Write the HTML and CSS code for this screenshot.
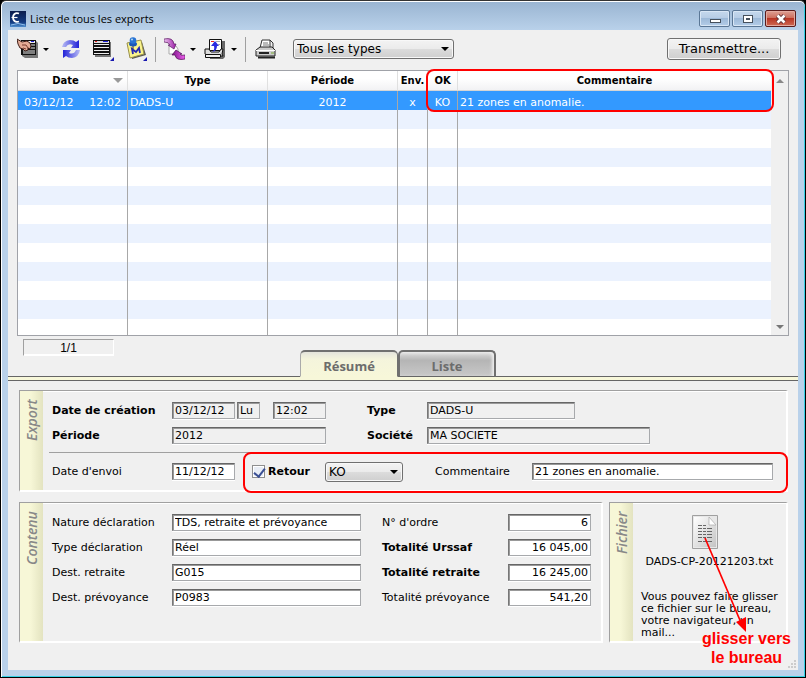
FILE: index.html
```html
<!DOCTYPE html>
<html lang="fr">
<head>
<meta charset="utf-8">
<title>Liste de tous les exports</title>
<link rel="stylesheet" href="styles.css">
</head>
<body>
<div class="window">
  <header class="titlebar">
    <svg class="app-icon" width="16" height="16" viewBox="0 0 16 16" aria-hidden="true">
      <defs><linearGradient id="app" x1="0" y1="0" x2="0" y2="1"><stop offset="0" stop-color="#0a1c4c"/><stop offset=".7" stop-color="#123a80"/><stop offset="1" stop-color="#4f8fd0"/></linearGradient></defs>
      <rect width="16" height="16" fill="url(#app)"/>
      <path d="M9 2.500C5 1 3 4 3 6.500S5 12 9 10.500" fill="none" stroke="#fff" stroke-width="1.800"/>
      <path d="M1.500 6.500h6" stroke="#fff" stroke-width="1.200"/>
      <path d="M1 14q7-3 14 0" fill="none" stroke="#8ec0ee"/>
    </svg>
    <h1 class="title">Liste de tous les exports</h1>
    <div class="window-buttons">
      <button class="win-btn" type="button" aria-label="Réduire"><svg width="14" height="12" viewBox="0 0 14 12"><rect x="2.500" y="6.500" width="10" height="3" fill="#fff" stroke="#46505c"/></svg></button>
      <button class="win-btn" type="button" aria-label="Agrandir"><svg width="14" height="12" viewBox="0 0 14 12"><rect x="2.500" y="2.500" width="9" height="7" fill="#fff" stroke="#46505c"/><rect x="5.500" y="5.500" width="3" height="1" fill="#a9bfd8" stroke="#46505c"/></svg></button>
      <button class="win-btn win-close" type="button" aria-label="Fermer"><svg width="14" height="12" viewBox="0 0 14 12"><path d="M3.500 2.500l7 7m0-7l-7 7" stroke="#5b3036" stroke-width="4.500"/><path d="M3.500 2.500l7 7m0-7l-7 7" stroke="#fff" stroke-width="2.600"/></svg></button>
    </div>
  </header>

  <main class="content">
    <div class="toolbar">
      <button class="tool tool-menu" type="button" aria-label="Choisir">
        <svg width="21" height="24" viewBox="0 0 21 24"><path d="M5 4h14l2 2v15H8l-3-2z" fill="#777"/><path d="M4 3h15v15H4z" fill="#111"/><path d="M5 4h13v2H5z" fill="#eee"/><path d="M8 4h3v1H8z" fill="#e22"/><path d="M14 4h3v1h-3z" fill="#22d"/><path d="M12 8h6M13 11h5M6 14h12M6 16h12" stroke="#eee"/><path d="M0 2l5 3 5-1 3 2 1 3-1 3-2-1v2l-3 1-2-2-3-1L1 7z" fill="#e3ab95" stroke="#40201a"/><path d="M5 8l4 0 2 3M6 11l3 1" stroke="#7a3a2e" fill="none"/></svg>
        <span class="caret"></span>
      </button>
      <button class="tool tool-refresh" type="button" aria-label="Actualiser">
        <svg width="18" height="20" viewBox="0 0 18 20"><defs><linearGradient id="ra"><stop offset="0" stop-color="#b9bdf5"/><stop offset="1" stop-color="#2222d8"/></linearGradient><linearGradient id="rb"><stop offset="0" stop-color="#2222d8"/><stop offset="1" stop-color="#b9bdf5"/></linearGradient></defs><path d="M0 8Q1 2 8 1q4 0 6 2l3-2v8H9l2-3Q6 4 4 8z" fill="url(#ra)"/><path d="M18 11q-1 7-8 8-4 0-6-2l-3 2v-8h8l-2 3q5 2 7-3z" fill="url(#rb)"/></svg>
      </button>
      <button class="tool tool-list" type="button" aria-label="Colonnes">
        <svg width="21" height="24" viewBox="0 0 21 24"><path d="M2 5h16v15H2z" fill="#777"/><path d="M0 3h17v15H0z" fill="#111"/><path d="M1 4h15v2H1z" fill="#ddd"/><path d="M2 4h2v1H2z" fill="#e22"/><path d="M10 4h5v1h-5z" fill="#22d"/><path d="M1 7.500h15M1 10.500h15M1 13.500h15M1 16.500h15" stroke="#eee"/><path d="M21 20v4h-4z" fill="#1818b0"/></svg>
      </button>
      <button class="tool tool-note" type="button" aria-label="Mémo">
        <svg width="21" height="25" viewBox="0 0 21 25"><path d="M3 8l13-3 4 13-14 4z" fill="#555"/><path d="M1 6l14-3 3 14-14 4z" fill="#faf48c" stroke="#99904a"/><path d="M7 17l-1-5 4 3 3-4 1 5" fill="none" stroke="#2428b4" stroke-width="1.800"/><path d="M7 8v4" stroke="#334"/><ellipse cx="7" cy="7" rx="4" ry="2.500" fill="#1c58b8"/><circle cx="7" cy="3.500" r="3.300" fill="#2a74d4"/><circle cx="6" cy="2.500" r="1" fill="#bde"/><path d="M21 20v4h-4z" fill="#1818b0"/></svg>
      </button>
      <span class="divider"></span>
      <button class="tool tool-menu tool-swap" type="button" aria-label="Transférer">
        <svg width="21" height="22" viewBox="0 0 21 22"><defs><linearGradient id="sw"><stop offset="0" stop-color="#ecc4ee"/><stop offset="1" stop-color="#9c1ca8"/></linearGradient><linearGradient id="sx"><stop offset="0" stop-color="#7c1488"/><stop offset="1" stop-color="#f060f0"/></linearGradient></defs><path d="M5 8h7l2 3v5H5z" fill="#fff" stroke="#aaa"/><path d="M0 1q9-2 10 5h2l-2 5-6-4h2Q5 4 0 4z" fill="url(#sw)" stroke="#5a1a62" stroke-width=".7"/><path d="M21 21q-9 2-10-4H8l4-5 6 4h-2q1 2 5 1z" fill="url(#sx)" stroke="#4a1050" stroke-width=".7"/></svg>
        <span class="caret"></span>
      </button>
      <button class="tool tool-menu tool-export" type="button" aria-label="Exporter">
        <svg width="22" height="22" viewBox="0 0 22 22"><path d="M18 3h3v16l-2 2H6v-1h11z" fill="#666"/><path d="M5.500 1.500h12v11h-12z" fill="#fff" stroke="#111"/><path d="M7 3.500h3" stroke="#e22"/><path d="M12 3.500h4M14 6.500h2" stroke="#aaa"/><path d="M1 11h4l2 3h8l2-3h2l-1 5 1 2H4l-3-2z" fill="#ddd" stroke="#111"/><path d="M1.500 16.500h15v3h-15z" fill="#eee" stroke="#111"/><path d="M8 14q3-2 2-6H7l4-5 4 5h-2q0 5-5 6z" fill="#2a2ae0"/></svg>
        <span class="caret"></span>
      </button>
      <span class="divider"></span>
      <button class="tool tool-print" type="button" aria-label="Imprimer">
        <svg width="21" height="20" viewBox="0 0 21 20"><path d="M5 9l2-8h8v8" fill="#fff" stroke="#333"/><path d="M15 1l3 3v5" fill="none" stroke="#333"/><path d="M8 4h5M8 6h6" stroke="#777"/><path d="M1 11l4-3h12l3 3v6H1z" fill="#ccc" stroke="#222"/><path d="M1 11.500h19" stroke="#fff"/><path d="M4 14h10" stroke="#222" stroke-width="2"/><path d="M16 14h3" stroke="#7a3"/><path d="M3 18.500h17" stroke="#222" stroke-width="2"/></svg>
      </button>
      <span class="select type-filter">
        <select aria-label="Type d'export"><option>Tous les types</option></select>
      </span>
      <button class="send" type="button">Transmettre...</button>
    </div>

    <div class="list">
      <table class="exports">
        <colgroup><col class="c-date"><col class="c-type"><col class="c-period"><col class="c-flag"><col class="c-flag"><col></colgroup>
        <thead>
          <tr><th>Date<span class="sort"></span></th><th>Type</th><th>Période</th><th>Env.</th><th>OK</th><th>Commentaire</th></tr>
        </thead>
        <tbody>
          <tr class="selected"><td class="when"><span>03/12/12</span><span>12:02</span></td><td>DADS-U</td><td class="mid">2012</td><td class="mid">x</td><td class="mid">KO</td><td>21 zones en anomalie.</td></tr>
          <tr><td></td><td></td><td></td><td></td><td></td><td></td></tr>
          <tr><td></td><td></td><td></td><td></td><td></td><td></td></tr>
          <tr><td></td><td></td><td></td><td></td><td></td><td></td></tr>
          <tr><td></td><td></td><td></td><td></td><td></td><td></td></tr>
          <tr><td></td><td></td><td></td><td></td><td></td><td></td></tr>
          <tr><td></td><td></td><td></td><td></td><td></td><td></td></tr>
          <tr><td></td><td></td><td></td><td></td><td></td><td></td></tr>
          <tr><td></td><td></td><td></td><td></td><td></td><td></td></tr>
          <tr><td></td><td></td><td></td><td></td><td></td><td></td></tr>
          <tr><td></td><td></td><td></td><td></td><td></td><td></td></tr>
          <tr><td></td><td></td><td></td><td></td><td></td><td></td></tr>
          <tr class="last"><td></td><td></td><td></td><td></td><td></td><td></td></tr>
        </tbody>
      </table>
      <div class="scrollbar"><span class="up"></span><span class="down"></span></div>
      <div class="mark mark-list"></div>
    </div>

    <div class="tabs-row">
      <div class="counter">1/1</div>
      <nav class="tabs">
        <button class="tab active" type="button">Résumé</button>
        <button class="tab" type="button">Liste</button>
      </nav>
    </div>
    <div class="band"></div>

    <div class="panels">
      <section class="panel export">
        <h2 class="side">Export</h2>
        <div class="panel-body">
          <div class="row">
            <label class="lbl strong" for="d1">Date de création</label>
            <input class="w-date" id="d1" value="03/12/12" readonly>
            <input class="w-day" aria-label="Jour" value="Lu" readonly>
            <input class="w-time" aria-label="Heure" value="12:02" readonly>
            <label class="lbl2 strong" for="ty">Type</label>
            <input class="w-type" id="ty" value="DADS-U" readonly>
          </div>
          <div class="row">
            <label class="lbl strong" for="pe">Période</label>
            <input class="w-period" id="pe" value="2012" readonly>
            <label class="lbl2 strong" for="so">Société</label>
            <input class="w-company" id="so" value="MA SOCIETE" readonly>
          </div>
          <div class="row sent">
            <label class="lbl" for="de">Date d'envoi</label>
            <input class="w-date" id="de" value="11/12/12">
            <div class="return">
              <label class="check strong"><input type="checkbox" checked>Retour</label>
              <span class="select result"><select aria-label="Résultat"><option>KO</option></select></span>
              <label class="comment-label" for="co">Commentaire</label>
              <input class="comment" id="co" value="21 zones en anomalie.">
              <div class="mark mark-return"></div>
            </div>
          </div>
        </div>
      </section>

      <div class="lower">
        <section class="panel contents">
          <h2 class="side">Contenu</h2>
          <div class="panel-body fields">
            <label for="f1">Nature déclaration</label><input id="f1" value="TDS, retraite et prévoyance">
            <label class="second" for="n1">N° d'ordre</label><input class="num" id="n1" value="6">
            <label for="f2">Type déclaration</label><input id="f2" value="Réel">
            <label class="second strong" for="n2">Totalité Urssaf</label><input class="num" id="n2" value="16 045,00">
            <label for="f3">Dest. retraite</label><input id="f3" value="G015">
            <label class="second strong" for="n3">Totalité retraite</label><input class="num" id="n3" value="16 245,00">
            <label for="f4">Dest. prévoyance</label><input id="f4" value="P0983">
            <label class="second" for="n4">Totalité prévoyance</label><input class="num" id="n4" value="541,20">
          </div>
        </section>
        <section class="panel file">
          <h2 class="side">Fichier</h2>
          <div class="panel-body file-body">
            <svg class="doc" width="26" height="34" viewBox="0 0 26 34" aria-hidden="true"><defs><linearGradient id="pg" x1="0" y1="0" x2="1" y2="1"><stop offset="0" stop-color="#fff"/><stop offset="1" stop-color="#c4c4c4"/></linearGradient></defs><path d="M.5.500h25v33H.5z" fill="#e8e8e8" stroke="#a0a0a0"/><path d="M2 2h15l7 8v22H2z" fill="url(#pg)"/><path d="M17 2l7 8h-7z" fill="#fff" stroke="#aaa" stroke-width=".7"/><path d="M6 10.500h9M6 13.500h15M6 16.500h15M6 19.500h15M6 22.500h14M6 26.500h15" stroke="#666" stroke-dasharray="4 1 3 1 5 1"/></svg>
            <p class="filename">DADS-CP-20121203.txt</p>
            <p class="hint">Vous pouvez faire glisser ce fichier sur le bureau, votre navigateur, un mail...</p>
          </div>
          <svg class="arrow" width="50" height="106" viewBox="0 0 50 106" aria-hidden="true"><path d="M5 5l37 87" stroke="#f00" stroke-width="1.700"/><path d="M36 89l10-5 0 15z" fill="#f00"/></svg>
          <p class="drag-note">glisser vers<br>le bureau</p>
        </section>
      </div>
    </div>
    <svg class="grip" width="9" height="9" viewBox="0 0 9 9" aria-hidden="true"><path d="M7 1h2M4 4h2M7 4h2M1 7h2M4 7h2M7 7h2" stroke="#ccc" stroke-width="2"/></svg>
  </main>
</div>
</body>
</html>
```
FILE: styles.css
```css
* { box-sizing: border-box; }

body {
  margin: 0;
  background: #000;
  font-family: "DejaVu Sans", Verdana, sans-serif;
  font-size: 11px;
  line-height: 14px;
  color: #000;
}

h1, h2, p { margin: 0; font-weight: normal; }

button, input, select { font: inherit; color: inherit; margin: 0; }

label { white-space: nowrap; }

.strong { font-weight: bold; }

.window {
  display: flex;
  flex-direction: column;
  min-height: 100vh;
  padding: 0 7px 7px;
  border: 1px solid #000;
  border-top-color: #333;
  border-radius: 6px 6px 0 0;
  background: linear-gradient(#99b4d1, #b9d1ea 29px, #b9d1ea);
  box-shadow: inset 0 1px #fff, inset 1px 0 #fff, inset -1px -1px #35d0e4;
}

.titlebar {
  display: flex;
  align-items: center;
  height: 29px;
  padding: 6px 2px 0;
}

.title {
  flex: 1;
  margin-left: 4px;
  font: 11px/16px "Open Sans", "Segoe UI", sans-serif;
}

.window-buttons { display: flex; gap: 2px; }

.win-btn {
  display: flex;
  align-items: center;
  justify-content: center;
  width: 31px;
  height: 17px;
  padding: 0;
  border: 1px solid #5b7796;
  border-radius: 2px;
  background: linear-gradient(#c5d8ed, #b6cce5 48%, #9db9d8 50%, #b4cde8);
  box-shadow: inset 0 0 0 1px #d8e6f5;
}

.win-close {
  border-color: #5a1b1b;
  background: linear-gradient(#dda094, #cd6c5b 48%, #b83524 50%, #cf6a54);
  box-shadow: inset 0 0 0 1px #e3aaa0;
}

.content {
  position: relative;
  flex: 1;
  padding: 0 9px;
  background: #f0f0f0;
}

.toolbar {
  display: flex;
  align-items: center;
  height: 40px;
  padding: 0 8px 2px 0;
}

.tool {
  display: flex;
  align-items: center;
  padding: 0;
  border: 0;
  background: none;
}

.tool-menu { gap: 5px; }
.tool-refresh { margin-left: 13px; }
.tool-list { margin-left: 13px; }
.tool-note { margin-left: 12px; }
.tool-swap { margin-left: 8px; }
.tool-export { margin-left: 8px; }
.tool-print { margin-left: 9px; }

.caret {
  border: 3px solid transparent;
  border-top-color: #000;
  border-bottom: 0;
}

.divider {
  width: 1px;
  height: 25px;
  margin-left: 8px;
  background: #a0a0a0;
}

.select { position: relative; display: flex; }

.select::after {
  content: "";
  position: absolute;
  top: 50%;
  right: 5px;
  margin-top: -2px;
  border: 4px solid transparent;
  border-top-color: #000;
  border-bottom: 0;
  pointer-events: none;
}

.select select {
  appearance: none;
  width: 100%;
  height: 20px;
  padding: 0 3px;
  border: 1px solid #707070;
  border-radius: 3px;
  background: linear-gradient(#f3f3f3, #ebebeb 48%, #dcdcdc 50%, #cfcfcf);
  box-shadow: inset 0 0 0 1px #f8f8f8;
  font-size: 12px;
}

.type-filter { width: 161px; margin-left: 17px; }

.send {
  width: 114px;
  height: 22px;
  margin-left: auto;
  padding: 0;
  border: 1px solid #707070;
  border-radius: 3px;
  background: linear-gradient(#f3f3f3, #ebebeb 48%, #dcdcdc 50%, #cfcfcf);
  box-shadow: inset 0 0 0 1px #f8f8f8;
  font-size: 13px;
}

.list {
  position: relative;
  display: flex;
  border: 1px solid #a0a2a8;
  background: #fff;
}

.exports {
  flex: 1;
  width: 0;
  table-layout: fixed;
  border-collapse: separate;
  border-spacing: 0;
}

.c-date { width: 110px; }
.c-type { width: 140px; }
.c-period { width: 130px; }
.c-flag { width: 30px; }

.exports th {
  position: relative;
  height: 20px;
  padding: 0;
  border-right: 1px solid #e0e0e0;
  border-bottom: 1px solid #d5d5d5;
  background: linear-gradient(#fff 40%, #f2f2f4);
  font-size: 10px;
}

.exports th:first-child { padding-right: 14px; }
.exports th:last-child, .exports td:last-child { border-right: 0; }

.sort {
  position: absolute;
  top: 7px;
  right: 4px;
  border: 5px solid transparent;
  border-top-color: #999;
  border-bottom: 0;
}

.exports td {
  height: 19px;
  padding: 4px 2px 0;
  border-right: 1px solid #a8a8a8;
  line-height: 14px;
  white-space: nowrap;
}

.exports tr:nth-child(even) td { background: #ebf2fe; }
.exports .last td { height: 16px; padding: 0; }
.exports .selected td { background: #3399ff; color: #fff; }
.exports .mid { text-align: center; }
.exports .when { padding: 4px 6px 0; }
.when span + span { float: right; }

.scrollbar {
  display: flex;
  flex-direction: column;
  justify-content: space-between;
  align-items: center;
  width: 17px;
  padding: 8px 0 6px;
  background: #f0f0f0;
}

.up, .down { border: 4px solid transparent; }
.up { border-top: 0; border-bottom-color: #888; }
.down { border-bottom: 0; border-top-color: #777; }

.mark {
  position: absolute;
  border: 2px solid #f00;
  border-radius: 8px;
  pointer-events: none;
}

.mark-list { top: -2px; left: 408px; right: 14px; height: 43px; }

.tabs-row {
  display: flex;
  align-items: flex-end;
  height: 40px;
  padding: 0 6px;
}

.counter {
  align-self: flex-start;
  width: 91px;
  height: 17px;
  margin-top: 3px;
  border: 1px solid;
  border-color: #a0a0a0 #fff #fff #a0a0a0;
  box-shadow: inset 0 -1px #fff;
  font: 12px/16px "Liberation Sans", Arial, sans-serif;
  text-align: center;
}

.tabs {
  position: relative;
  display: flex;
  margin-bottom: -1px;
  margin-left: 186px;
}

.tab {
  width: 98px;
  height: 27px;
  padding: 3px 0 0;
  border: 2px solid #707070;
  border-bottom: 1px solid #666;
  border-radius: 5px 5px 0 0;
  background: linear-gradient(#ddd, #b5b5b5 35%, #c8c8c8);
  box-shadow: inset -2px 1px 3px #eee;
  font: bold 13px/18px "Open Sans", sans-serif;
  color: #6c6c6c;
}

.tab.active {
  border-left-width: 1px;
  border-left-color: #aaa;
  border-right-width: 1px;
  border-bottom-color: #f7f7d9;
  background: linear-gradient(#e4e4dc, #f4f4dc 30%, #f7f7d9);
  box-shadow: none;
}

.band {
  height: 5px;
  margin: 0 -9px;
  border: solid #666;
  border-width: 1px 0;
  background: #f7f7d9;
}

.panels {
  display: flex;
  flex-direction: column;
  gap: 10px;
  margin: 9px 1px 0 2px;
}

.panel {
  position: relative;
  display: flex;
  border: 1px solid #a0a0a0;
  border-right: 2px solid #fff;
  border-bottom: 2px solid #fff;
  box-shadow: inset 0 1px #fff;
}

.side {
  width: 23px;
  padding: 0 0 8px;
  background: linear-gradient(90deg, #e3e3c0, #f7f7d7 55%, #f7f7d7);
  font: italic 600 14px/23px "Open Sans", sans-serif;
  color: #888;
  text-align: right;
  writing-mode: vertical-rl;
  transform: rotate(180deg);
}

.panel-body { flex: 1; min-width: 0; }

.export { height: 102px; }
.export .panel-body { padding: 11px 13px 0 0; }

.row {
  display: flex;
  align-items: center;
  height: 17px;
  margin: 0 0 8px 9px;
}

.panel input:not([type="checkbox"]) {
  height: 17px;
  padding: 0 2px;
  border: 1px solid #a7a9ac;
  border-top-color: #666;
  border-left-color: #777;
  border-radius: 0;
  background: #fff;
  box-shadow: inset 1px 1px #999, 0 1px #fff;
  font-size: 11px;
}

.panel input[readonly]:not([type="checkbox"]) { background: #f0f0f0; }

.lbl { width: 120px; }
.lbl2 { width: 60px; margin-left: 41px; }
.w-date { width: 63px; }
.w-day { width: 23px; margin-left: 2px; }
.w-time { width: 53px; margin-left: 13px; }
.w-period { width: 154px; }
.w-type { width: 148px; }
.w-company { width: 223px; }

.sent {
  height: 38px;
  margin: 0 0 0 6px;
  padding-left: 3px;
  border-top: 1px solid #a0a0a0;
}

.return {
  position: relative;
  display: flex;
  flex: 1;
  align-items: center;
  margin-left: 17px;
}

.check { display: flex; align-items: center; gap: 3px; width: 73px; }

.check input {
  appearance: none;
  width: 13px;
  height: 13px;
  border: 1px solid #8e8f8f;
  background: #e8edf5;
  box-shadow: inset 0 0 0 1px #fff;
}

.check input:checked::after {
  content: "";
  display: block;
  width: 5px;
  height: 9px;
  margin: 0 0 0 3px;
  border: solid #3a4f94;
  border-width: 0 2px 2px 0;
  transform: rotate(38deg);
}

.result { width: 78px; }
.comment-label { width: 97px; margin-left: 32px; }
.comment { flex: 1; min-width: 0; }

.mark-return { top: -10px; left: -9px; right: -15px; height: 41px; }

.lower { display: grid; grid-template-columns: 1fr 179px; gap: 6px; height: 141px; }

.fields {
  display: grid;
  grid-template-columns: 120px 1fr 147px 83px;
  grid-auto-rows: 17px;
  gap: 8px 0;
  align-items: center;
  padding: 11px 10px 0 9px;
}

.fields input { width: 100%; min-width: 0; }
.fields .second { padding-left: 21px; }
.fields .num { text-align: right; }

.file-body {
  display: flex;
  flex-direction: column;
  align-items: center;
  padding: 12px 0 0;
}

.doc { margin-right: 10px; }

.filename { margin-top: 6px; font-size: 11px; }

.hint {
  margin: 22px 0 0 8px;
  align-self: flex-start;
  width: 144px;
  font-size: 11px;
  line-height: 12px;
}

.arrow { position: absolute; top: 30px; left: 90px; }

.drag-note {
  position: absolute;
  top: 126px;
  right: -5px;
  font: bold 16px/19px "Liberation Sans", Arial, sans-serif;
  color: #f00;
  text-align: center;
  white-space: nowrap;
}

.grip { position: absolute; right: 2px; bottom: 1px; }
```
